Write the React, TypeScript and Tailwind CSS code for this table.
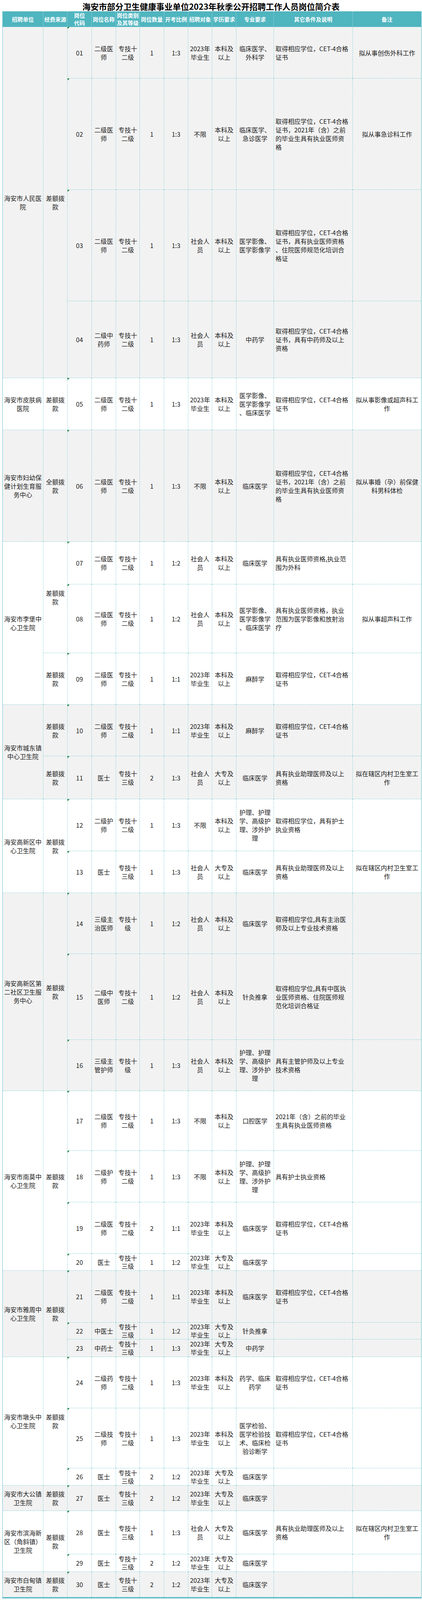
import React from "react";

type Row = {
  code: string;
  name: string[];
  cat: string[];
  num: string;
  ratio: string;
  target: string[];
  edu: string[];
  major: string[];
  other: string[];
  note: string[];
  fund?: string[];
  fundSpan?: string;
  tri?: boolean;
  tight?: boolean;
};

type Group = { unit: string[]; span: string; bg: string; rows: Row[] };

const DR = ["二级医", "师"];
const ZJ2 = ["专技十", "二级"];
const ZJ3 = ["专技十", "三级"];
const ZJ10 = ["专技十", "级"];
const BK = ["本科及", "以上"];
const DZ = ["大专及", "以上"];
const Y23 = ["2023年", "毕业生"];
const SH = ["社会人", "员"];
const CET = ["取得相应学位，CET-4合格", "证书"];
const FUND = ["差额拨", "款"];
const HULI = ["护理、护理", "学、高级护", "理、涉外护", "理"];
const CUN = ["拟在辖区内村卫生室工", "作"];
const ZL = ["具有执业助理医师及以上", "资格"];

const GRAY = "bg-[#f2f2f2]";
const WHITE = "bg-white";

const groups: Group[] = [
  {
    unit: ["海安市人民医", "院"],
    span: "row-span-4",
    bg: GRAY,
    rows: [
      { code: "01", name: DR, cat: ZJ2, num: "1", ratio: "1:3", target: Y23, edu: BK, major: ["临床医学、", "外科学"], other: CET, note: ["拟从事创伤外科工作"], fund: FUND, fundSpan: "row-span-4", tri: true },
      { code: "02", name: DR, cat: ZJ2, num: "1", ratio: "1:3", target: ["不限"], edu: BK, major: ["临床医学、", "急诊医学"], other: ["取得相应学位，CET-4合格", "证书，2021年（含）之前", "的毕业生具有执业医师资", "格"], note: ["拟从事急诊科工作"], tri: true },
      { code: "03", name: DR, cat: ZJ2, num: "1", ratio: "1:3", target: SH, edu: BK, major: ["医学影像、", "医学影像学"], other: ["取得相应学位，CET-4合格", "证书，具有执业医师资格", "、住院医师规范化培训合", "格证"], note: [], tri: true },
      { code: "04", name: ["二级中", "药师"], cat: ZJ2, num: "1", ratio: "1:3", target: SH, edu: BK, major: ["中药学"], other: ["取得相应学位，CET-4合格", "证书，具有中药师及以上", "资格"], note: [] },
    ],
  },
  {
    unit: ["海安市皮肤病", "医院"],
    span: "row-span-1",
    bg: WHITE,
    rows: [
      { code: "05", name: DR, cat: ZJ2, num: "1", ratio: "1:3", target: Y23, edu: BK, major: ["医学影像、", "医学影像学", "、临床医学"], other: CET, note: ["拟从事影像或超声科工", "作"], fund: FUND, fundSpan: "row-span-1", tri: true },
    ],
  },
  {
    unit: ["海安市妇幼保", "健计划生育服", "务中心"],
    span: "row-span-1",
    bg: GRAY,
    rows: [
      { code: "06", name: DR, cat: ZJ2, num: "1", ratio: "1:3", target: ["不限"], edu: BK, major: ["临床医学"], other: ["取得相应学位，CET-4合格", "证书，2021年（含）之前", "的毕业生具有执业医师资", "格"], note: ["拟从事婚（孕）前保健", "科男科体检"], fund: ["全额拨", "款"], fundSpan: "row-span-1", tri: true },
    ],
  },
  {
    unit: ["海安市李堡中", "心卫生院"],
    span: "row-span-3",
    bg: WHITE,
    rows: [
      { code: "07", name: DR, cat: ZJ2, num: "1", ratio: "1:2", target: SH, edu: BK, major: ["临床医学"], other: ["具有执业医师资格,执业范", "围为外科"], note: [], fund: FUND, fundSpan: "row-span-2", tri: true },
      { code: "08", name: DR, cat: ZJ2, num: "1", ratio: "1:2", target: SH, edu: BK, major: ["医学影像、", "医学影像学", "、临床医学"], other: ["具有执业医师资格，执业", "范围为医学影像和放射治", "疗"], note: ["拟从事超声科工作"], tri: true },
      { code: "09", name: DR, cat: ZJ2, num: "1", ratio: "1:1", target: Y23, edu: BK, major: ["麻醉学"], other: CET, note: [], fund: FUND, fundSpan: "row-span-1", tri: true },
    ],
  },
  {
    unit: ["海安市城东镇", "中心卫生院"],
    span: "row-span-2",
    bg: GRAY,
    rows: [
      { code: "10", name: DR, cat: ZJ2, num: "1", ratio: "1:1", target: Y23, edu: BK, major: ["麻醉学"], other: CET, note: [], fund: FUND, fundSpan: "row-span-1", tri: true },
      { code: "11", name: ["医士"], cat: ZJ3, num: "2", ratio: "1:3", target: SH, edu: DZ, major: ["临床医学"], other: ZL, note: CUN, fund: FUND, fundSpan: "row-span-1", tri: true },
    ],
  },
  {
    unit: ["海安高新区中", "心卫生院"],
    span: "row-span-2",
    bg: WHITE,
    rows: [
      { code: "12", name: ["二级护", "师"], cat: ZJ2, num: "1", ratio: "1:3", target: ["不限"], edu: BK, major: HULI, other: ["取得相应学位，具有护士", "执业资格"], note: [], fund: FUND, fundSpan: "row-span-2", tri: true },
      { code: "13", name: ["医士"], cat: ZJ3, num: "1", ratio: "1:3", target: SH, edu: DZ, major: ["临床医学"], other: ZL, note: CUN, tri: true },
    ],
  },
  {
    unit: ["海安高新区第", "二社区卫生服", "务中心"],
    span: "row-span-3",
    bg: GRAY,
    rows: [
      { code: "14", name: ["三级主", "治医师"], cat: ZJ10, num: "1", ratio: "1:2", target: SH, edu: BK, major: ["临床医学"], other: ["取得相应学位,具有主治医", "师及以上专业技术资格"], note: [], fund: FUND, fundSpan: "row-span-3", tri: true },
      { code: "15", name: ["二级中", "医师"], cat: ZJ2, num: "1", ratio: "1:2", target: SH, edu: BK, major: ["针灸推拿"], other: ["取得相应学位,具有中医执", "业医师资格、住院医师规", "范化培训合格证"], note: [], tri: true },
      { code: "16", name: ["三级主", "管护师"], cat: ZJ10, num: "1", ratio: "1:3", target: SH, edu: BK, major: HULI, other: ["具有主管护师及以上专业", "技术资格"], note: [], tri: true },
    ],
  },
  {
    unit: ["海安市南莫中", "心卫生院"],
    span: "row-span-4",
    bg: WHITE,
    rows: [
      { code: "17", name: DR, cat: ZJ2, num: "1", ratio: "1:3", target: ["不限"], edu: BK, major: ["口腔医学"], other: ["2021年（含）之前的毕业", "生具有执业医师资格"], note: [], fund: FUND, fundSpan: "row-span-4", tri: true },
      { code: "18", name: ["二级护", "师"], cat: ZJ2, num: "1", ratio: "1:3", target: ["不限"], edu: BK, major: HULI, other: ["具有护士执业资格"], note: [], tri: true },
      { code: "19", name: DR, cat: ZJ2, num: "2", ratio: "1:1", target: Y23, edu: BK, major: ["临床医学"], other: CET, note: [], tri: true },
      { code: "20", name: ["医士"], cat: ZJ3, num: "1", ratio: "1:2", target: Y23, edu: DZ, major: ["临床医学"], other: [], note: [], tri: true, tight: true },
    ],
  },
  {
    unit: ["海安市雅周中", "心卫生院"],
    span: "row-span-3",
    bg: GRAY,
    rows: [
      { code: "21", name: DR, cat: ZJ2, num: "1", ratio: "1:1", target: Y23, edu: BK, major: ["临床医学"], other: CET, note: [], fund: FUND, fundSpan: "row-span-3", tri: true },
      { code: "22", name: ["中医士"], cat: ZJ3, num: "1", ratio: "1:2", target: Y23, edu: DZ, major: ["针灸推拿"], other: [], note: [], tri: true, tight: true },
      { code: "23", name: ["中药士"], cat: ZJ3, num: "1", ratio: "1:3", target: Y23, edu: DZ, major: ["中药学"], other: [], note: [], tight: true },
    ],
  },
  {
    unit: ["海安市墩头中", "心卫生院"],
    span: "row-span-3",
    bg: WHITE,
    rows: [
      { code: "24", name: ["二级药", "师"], cat: ZJ2, num: "1", ratio: "1:3", target: Y23, edu: BK, major: ["药学、临床", "药学"], other: CET, note: [], fund: FUND, fundSpan: "row-span-3", tri: true },
      { code: "25", name: ["二级技", "师"], cat: ZJ2, num: "1", ratio: "1:3", target: Y23, edu: BK, major: ["医学检验、", "医学检验技", "术、临床检", "验诊断学"], other: CET, note: [], tri: true },
      { code: "26", name: ["医士"], cat: ZJ3, num: "2", ratio: "1:2", target: Y23, edu: DZ, major: ["临床医学"], other: [], note: [], tri: true, tight: true },
    ],
  },
  {
    unit: ["海安市大公镇", "卫生院"],
    span: "row-span-1",
    bg: GRAY,
    rows: [
      { code: "27", name: ["医士"], cat: ZJ3, num: "2", ratio: "1:2", target: Y23, edu: DZ, major: ["临床医学"], other: [], note: [], fund: FUND, fundSpan: "row-span-1", tri: true },
    ],
  },
  {
    unit: ["海安市滨海新", "区（角斜镇）", "卫生院"],
    span: "row-span-2",
    bg: WHITE,
    rows: [
      { code: "28", name: ["医士"], cat: ZJ3, num: "1", ratio: "1:3", target: SH, edu: DZ, major: ["临床医学"], other: ZL, note: CUN, fund: FUND, fundSpan: "row-span-2", tri: true },
      { code: "29", name: ["医士"], cat: ZJ3, num: "2", ratio: "1:2", target: Y23, edu: DZ, major: ["临床医学"], other: [], note: [], tri: true, tight: true },
    ],
  },
  {
    unit: ["海安市白甸镇", "卫生院"],
    span: "row-span-1",
    bg: GRAY,
    rows: [
      { code: "30", name: ["医士"], cat: ZJ3, num: "2", ratio: "1:2", target: Y23, edu: DZ, major: ["临床医学"], other: [], note: [], fund: FUND, fundSpan: "row-span-1", tri: true },
    ],
  },
];

const headers: string[][] = [
  ["招聘单位"],
  ["经费来源"],
  ["岗位", "代码"],
  ["岗位名称"],
  ["岗位类别", "及其等级"],
  ["岗位数量"],
  ["开考比例"],
  ["招聘对象"],
  ["学历要求"],
  ["专业要求"],
  ["其它条件及说明"],
  ["备注"],
];

const lineBorder = "border-r border-b border-dashed border-[#86cdd3]";

function Lines({ lines }: { lines: string[] }) {
  return (
    <>
      {lines.map((l, i) => (
        <div key={i} className="whitespace-nowrap">
          {l}
        </div>
      ))}
    </>
  );
}

function Cell({
  lines,
  bg,
  extra = "",
  left = false,
  last = false,
  tight = false,
  children,
}: {
  lines: string[];
  bg: string;
  extra?: string;
  left?: boolean;
  last?: boolean;
  tight?: boolean;
  children?: React.ReactNode;
}) {
  const align = left ? "items-start text-left pl-[4px]" : "items-center text-center";
  const border = last ? "border-b border-dashed border-[#86cdd3]" : lineBorder;
  const lh = tight ? "leading-[21px]" : "leading-[22px]";
  return (
    <div className={`relative flex min-h-0 min-w-0 flex-col justify-center ${align} ${border} ${bg} ${lh} ${extra}`}>
      {children}
      <Lines lines={lines} />
    </div>
  );
}

export default function App() {
  const cells: React.ReactNode[] = [];
  groups.forEach((g, gi) => {
    g.rows.forEach((r, ri) => {
      const k = `${gi}-${ri}`;
      const t = !!r.tight;
      if (ri === 0) {
        cells.push(<Cell key={k + "u"} lines={g.unit} bg={g.bg} extra={g.span} />);
      }
      if (r.fund) {
        cells.push(<Cell key={k + "f"} lines={r.fund} bg={g.bg} extra={r.fundSpan} />);
      }
      cells.push(
        <Cell key={k + "c"} lines={[r.code]} bg={g.bg} tight={t}>
          {r.tri ? (
            <span className="absolute left-0 top-0 h-0 w-0 border-t-[5px] border-r-[5px] border-t-[#1f7a33] border-r-transparent" />
          ) : null}
        </Cell>
      );
      cells.push(<Cell key={k + "n"} lines={r.name} bg={g.bg} tight={t} />);
      cells.push(<Cell key={k + "t"} lines={r.cat} bg={g.bg} tight={t} />);
      cells.push(<Cell key={k + "q"} lines={[r.num]} bg={g.bg} tight={t} />);
      cells.push(<Cell key={k + "r"} lines={[r.ratio]} bg={g.bg} tight={t} />);
      cells.push(<Cell key={k + "o"} lines={r.target} bg={g.bg} tight={t} />);
      cells.push(<Cell key={k + "e"} lines={r.edu} bg={g.bg} tight={t} />);
      cells.push(<Cell key={k + "m"} lines={r.major} bg={g.bg} tight={t} />);
      cells.push(<Cell key={k + "x"} lines={r.other} bg={g.bg} left tight={t} />);
      cells.push(<Cell key={k + "z"} lines={r.note} bg={g.bg} last tight={t} />);
    });
  });

  return (
    <div className="w-[1080px] bg-white text-[#1c1c1c] [font-family:'Noto_Sans_CJK_SC','Noto_Sans',sans-serif]">
      <div className="flex h-[29px] items-center justify-center pt-[3px] text-[21px] font-bold leading-[26px] text-black">
        海安市部分卫生健康事业单位2023年秋季公开招聘工作人员岗位简介表
      </div>
      <div className="ml-[6px] w-[1073px] border-x border-b-[3px] border-x-[#6cc3ca] border-b-[#5bbcc5]">
        <div className="grid grid-cols-[104px_62px_62px_62px_61px_62px_62px_61px_62px_96px_202px_175px] grid-rows-[40px_132px_285px_285px_197px_133px_286px_109px_176px_132px_132px_110px_133px_107px_156px_220px_131px_153px_132px_132px_43px_133px_43px_45px_131px_154px_44px_65px_111px_45px_65px] text-[16px]">
          {headers.map((h, i) => (
            <div
              key={"h" + i}
              className={`flex flex-col items-center justify-center bg-[#4fb5bf] text-center text-[14px] font-bold leading-[19px] text-white ${
                i < headers.length - 1 ? "border-r border-dashed border-[#a9dde2]" : ""
              }`}
            >
              <Lines lines={h} />
            </div>
          ))}
          {cells}
        </div>
      </div>
    </div>
  );
}
